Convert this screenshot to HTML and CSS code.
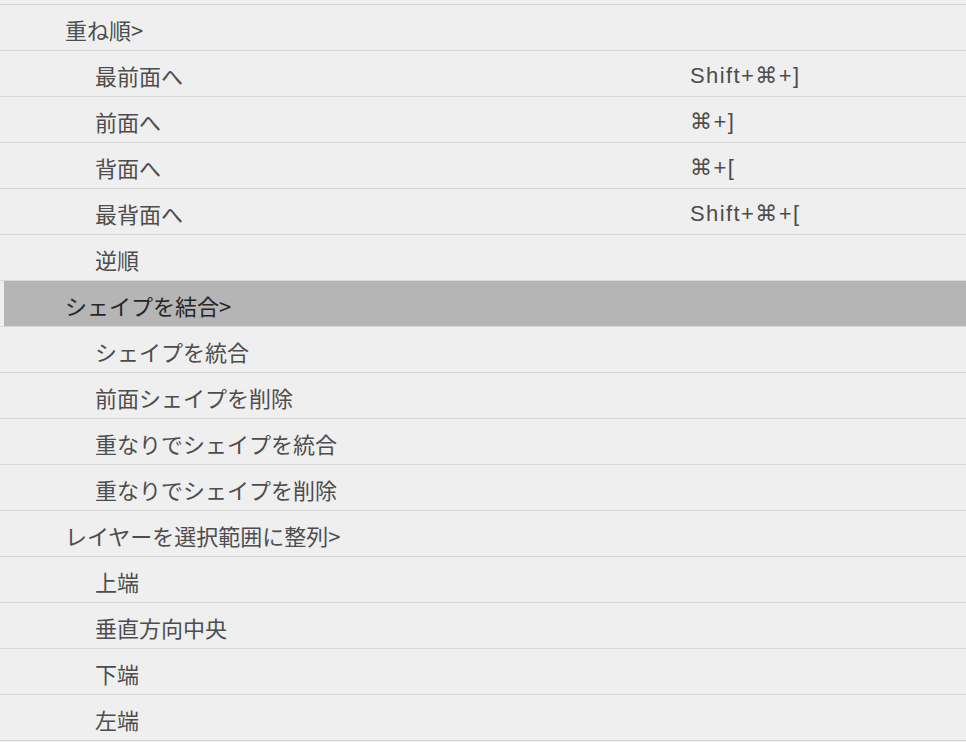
FILE: index.html
```html
<!DOCTYPE html>
<html lang="ja">
<head>
<meta charset="utf-8">
<link rel="stylesheet" href="styles.css">
</head>
<body>
<div class="menu">
  <div class="row l1"><span class="label">重ね順&gt;</span></div>
  <div class="row l2"><span class="label">最前面へ</span><span class="key">Shift+⌘+]</span></div>
  <div class="row l2"><span class="label">前面へ</span><span class="key">⌘+]</span></div>
  <div class="row l2"><span class="label">背面へ</span><span class="key">⌘+[</span></div>
  <div class="row l2"><span class="label">最背面へ</span><span class="key">Shift+⌘+[</span></div>
  <div class="row l2"><span class="label">逆順</span></div>
  <div class="row l1 active"><span class="label">シェイプを結合&gt;</span></div>
  <div class="row l2"><span class="label">シェイプを統合</span></div>
  <div class="row l2"><span class="label">前面シェイプを削除</span></div>
  <div class="row l2"><span class="label">重なりでシェイプを統合</span></div>
  <div class="row l2"><span class="label">重なりでシェイプを削除</span></div>
  <div class="row l1"><span class="label">レイヤーを選択範囲に整列&gt;</span></div>
  <div class="row l2"><span class="label">上端</span></div>
  <div class="row l2"><span class="label">垂直方向中央</span></div>
  <div class="row l2"><span class="label">下端</span></div>
  <div class="row l2 last"><span class="label">左端</span></div>
</div>
</body>
</html>
```
FILE: styles.css
```css
html, body {
  margin: 0;
  padding: 0;
  background: #efefef;
}
body {
  font-family: "Noto Sans CJK JP", "Noto Sans", sans-serif;
  font-size: 22px;
  color: #4d4d4d;
}
.menu {
  padding-top: 4px;
  width: 966px;
}
.row {
  display: flex;
  height: 45px;
  border-top: 1px solid #d9d9d9;
}
.row.last {
  border-bottom: 1px solid #d9d9d9;
}
.label,
.key {
  display: block;
  height: 45px;
  line-height: 45px;
  padding-top: 2px;
  box-sizing: border-box;
}
.l1 .label { margin-left: 65px; }
.l2 .label { margin-left: 95px; width: 595px; }
.key {
  font-family: "Liberation Sans", "DejaVu Sans", sans-serif;
  font-size: 22px;
  letter-spacing: 1.4px;
}
.row.active {
  color: #262626;
  background: linear-gradient(to right, #efefef 0, #efefef 4px, #b5b5b5 4px);
}
```
